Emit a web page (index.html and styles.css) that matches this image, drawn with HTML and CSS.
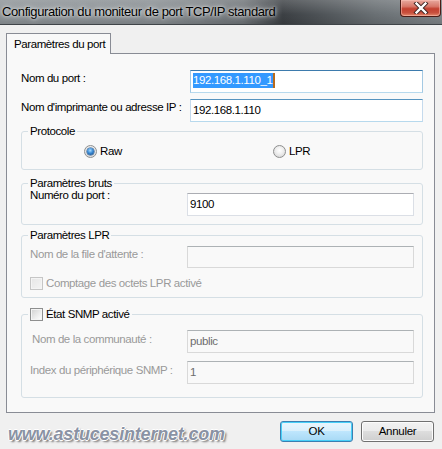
FILE: index.html
```html
<!DOCTYPE html>
<html lang="fr">
<head>
<meta charset="utf-8">
<title>Configuration du moniteur de port TCP/IP standard</title>
<link rel="stylesheet" href="styles.css">
</head>
<body>
<div class="window">
  <div class="titlebar">
    <span class="title">Configuration du moniteur de port TCP/IP standard</span>
    <div class="close">
      <svg width="16" height="12" viewBox="0 0 16 12">
        <path d="M3.5 1.5 L12.5 10.5 M12.5 1.5 L3.5 10.5" stroke="#3b2220" stroke-width="4.2" stroke-linecap="square" fill="none"/>
        <path d="M3.5 1.5 L12.5 10.5 M12.5 1.5 L3.5 10.5" stroke="#ffffff" stroke-width="2.4" stroke-linecap="square" fill="none"/>
      </svg>
    </div>
  </div>
  <div class="body">
    <div class="tabs"><div class="tab">Paramètres du port</div></div>
    <div class="panel">
      <div class="row row-port">
        <span class="label">Nom du port :</span>
        <div class="input wide focus"><span class="sel">192.168.1.110_1</span><span class="caret"></span></div>
      </div>
      <div class="row row-ip">
        <span class="label">Nom d'imprimante ou adresse IP :</span>
        <div class="input wide hover">192.168.1.110</div>
      </div>

      <fieldset class="group g-proto">
        <legend>Protocole</legend>
        <div class="radios">
          <span class="radio-item raw"><span class="radio on"></span>Raw</span>
          <span class="radio-item lpr"><span class="radio"></span>LPR</span>
        </div>
      </fieldset>

      <fieldset class="group g-raw">
        <legend>Paramètres bruts</legend>
        <div class="row">
          <span class="label up">Numéro du port :</span>
          <div class="input narrow">9100</div>
        </div>
      </fieldset>

      <fieldset class="group g-lpr">
        <legend>Paramètres LPR</legend>
        <div class="row">
          <span class="label dis">Nom de la file d'attente :</span>
          <div class="input narrow disabled"></div>
        </div>
        <div class="check-row dis"><span class="check disabled"></span>Comptage des octets LPR activé</div>
      </fieldset>

      <fieldset class="group g-snmp">
        <legend><span class="check"></span>État SNMP activé</legend>
        <div class="row">
          <span class="label dis ind1">Nom de la communauté :</span>
          <div class="input narrow disabled">public</div>
        </div>
        <div class="row row-idx">
          <span class="label dis">Index du périphérique SNMP :</span>
          <div class="input narrow disabled">1</div>
        </div>
      </fieldset>
    </div>
    <div class="footer">
      <span class="watermark">www.astucesinternet.com</span>
      <div class="buttons">
        <button class="btn default">OK</button>
        <button class="btn">Annuler</button>
      </div>
    </div>
  </div>
</div>
</body>
</html>
```
FILE: styles.css
```css
* { box-sizing: border-box; }
html, body { margin: 0; padding: 0; }
body {
  width: 442px;
  height: 449px;
  overflow: hidden;
  background: #f0f0f0;
  font-family: "Liberation Sans", Arial, sans-serif;
  font-size: 11.5px;
  letter-spacing: -0.4px;
  color: #000;
}
.window { width: 442px; height: 449px; display: flex; flex-direction: column; }

.titlebar {
  height: 25px;
  border-bottom: 1px solid #3f4448;
  background:
    linear-gradient(180deg, rgba(255,255,255,0.18) 0%, rgba(255,255,255,0) 60%, rgba(0,0,0,0.1) 100%),
    linear-gradient(90deg, #8c9296 0%, #878d91 35%, #6f7478 55%, #3c4044 64%, #4d5256 72%, #6a7074 85%, #7f8589 100%);
  display: flex;
  justify-content: space-between;
  align-items: flex-start;
}
.title {
  font-size: 13px;
  letter-spacing: -0.4px;
  line-height: 16px;
  margin: 4px 0 0 2px;
  color: #000;
  white-space: nowrap;
  text-shadow: 0 0 6px rgba(255,255,255,0.9), 0 0 3px rgba(255,255,255,0.8);
}
.close {
  width: 41px;
  height: 17px;
  margin-right: 1px;
  border: 1px solid #4a1b16;
  border-top: none;
  border-radius: 0 0 4px 4px;
  background: linear-gradient(180deg, #e8a99e 0%, #d8786a 40%, #c3402f 55%, #c8503e 80%, #e48a6c 100%);
  box-shadow: inset 0 0 0 1px rgba(255,200,190,0.5);
  display: flex;
  align-items: center;
  justify-content: center;
}
.close svg { display: block; }

.body { flex: 1; display: flex; flex-direction: column; }

.tabs { margin: 8px 0 0 6px; display: flex; position: relative; z-index: 1; }
.tab {
  width: 105px;
  height: 21px;
  margin-bottom: -1px;
  border: 1px solid #898c95;
  border-bottom: none;
  background: #f9f9f9;
  padding: 3px 0 0 7px;
  line-height: 15px;
  white-space: nowrap;
}

.panel {
  width: 429px;
  height: 360px;
  margin-left: 6px;
  border: 1px solid #898c95;
  background: #f9f9f9;
  padding: 16px 11px 0 14px;
  display: flex;
  flex-direction: column;
}

.row { display: flex; align-items: flex-start; }
.row-ip { margin-top: 6px; }
.label { flex: 1; line-height: 13px; padding-top: 2px; white-space: nowrap; }
.label.up { margin-top: -4px; padding-top: 0; }
.label.ind1 { padding-left: 2px; }
.dis { color: #9a9a9a; }

.input {
  height: 23px;
  background: #fff;
  border: 1px solid #dbdfe6;
  border-top-color: #abadb3;
  padding: 3px 2px 0 2px;
  line-height: 15px;
  white-space: nowrap;
  display: flex;
  align-items: flex-start;
}
.input.wide { width: 233px; }
.input.narrow { width: 227px; }
.input.focus { border-color: #a4c9e3; border-top-color: #3d7bad; border-bottom-color: #b7d9ed; padding-top: 2px; }
.input.hover { border-color: #c5daed; border-top-color: #5794bf; border-bottom-color: #b7d9ed; }
.input.disabled { background: #f9f9f9; border-color: #d9d9d9; border-top-color: #adb2b5; color: #6d6d6d; }
.sel { background: #3399ff; color: #fff; line-height: 15px; padding-right: 1px; }
.caret { width: 2px; height: 15px; background: #b86a1c; }

.group {
  margin: 3px 0 0 0;
  padding: 0 8px 0 8px;
  border: 1px solid #d5dfe5;
  border-radius: 3px;
  min-width: 0;
}
.group legend {
  margin-left: -2px;
  padding: 0 2px;
  line-height: 13px;
  display: flex;
  align-items: center;
}
.g-proto { padding-top: 7px; padding-bottom: 11px; }
.radios { display: flex; height: 13px; align-items: center; }
.radio-item { display: flex; align-items: center; gap: 3px; line-height: 13px; }
.raw { margin-left: 54px; width: 189px; }
.radio {
  width: 13px; height: 13px; border-radius: 50%;
  border: 1px solid #8e8f8f;
  background: radial-gradient(circle at 50% 40%, #ffffff 0%, #f0f0f0 40%, #cfcfcf 100%);
  position: relative;
  flex: none;
}
.radio.on::after {
  content: "";
  position: absolute;
  left: 2px; top: 2px;
  width: 7px; height: 7px;
  border-radius: 50%;
  background: radial-gradient(circle at 45% 35%, #a9dcff 0%, #3a8ad4 45%, #0f3f79 100%);
  box-shadow: 0 0 0 0.5px #1c4d82;
}

.g-raw { margin-top: 7px; padding-top: 3px; padding-bottom: 8px; }
.g-lpr { margin-top: 4px; padding-top: 4px; padding-bottom: 7px; }
.g-lpr .input { height: 22px; }
.check-row { display: flex; align-items: center; gap: 3px; margin-top: 9px; height: 13px; line-height: 13px; }
.check {
  width: 13px; height: 13px;
  border: 1px solid #8e8f8f;
  background: linear-gradient(135deg, #d0d0d0 0%, #eeeeee 60%, #ffffff 100%);
  box-shadow: inset 0 0 0 1px #f4f4f4;
  flex: none;
}
.check.disabled { border-color: #c6c6c6; background: linear-gradient(135deg, #e6e6e6 0%, #f4f4f4 100%); }
.g-snmp { margin-top: 10px; padding-top: 9px; padding-bottom: 13px; }
.g-snmp legend { gap: 3px; }
.g-snmp .label { padding-top: 3px; }
.row-idx { margin-top: 8px; }

.footer {
  flex: 1;
  display: flex;
  justify-content: space-between;
  align-items: flex-start;
  padding: 8px 8px 0 8px;
}
.watermark {
  font-family: "Liberation Sans", Arial, sans-serif;
  font-weight: bold;
  font-style: italic;
  font-size: 18px;
  line-height: 20px;
  margin-top: 3px;
  color: #8a92a4;
  letter-spacing: -0.2px;
  text-shadow: 1px 0 0 #fff, -1px 0 0 #fff, 0 1px 0 #fff, 0 -1px 0 #fff, 2px 2px 2px rgba(0,0,0,0.5);
}
.buttons { display: flex; gap: 8px; }
.btn {
  width: 73px; height: 21px;
  font-family: inherit; font-size: 11.5px; letter-spacing: -0.3px; color: #000;
  border: 1px solid #707070;
  border-radius: 3px;
  background: linear-gradient(180deg, #f2f2f2 0%, #ebebeb 49%, #dddddd 50%, #cfcfcf 100%);
  box-shadow: inset 0 0 0 1px #fcfcfc;
  padding: 0;
  line-height: 17px;
}
.btn.default {
  border-color: #3c7fb1;
  box-shadow: inset 0 0 0 1px #48d0f8;
  background: linear-gradient(180deg, #eaf6fd 0%, #d9f0fc 49%, #bee6fd 50%, #a7d9f5 100%);
}
```
